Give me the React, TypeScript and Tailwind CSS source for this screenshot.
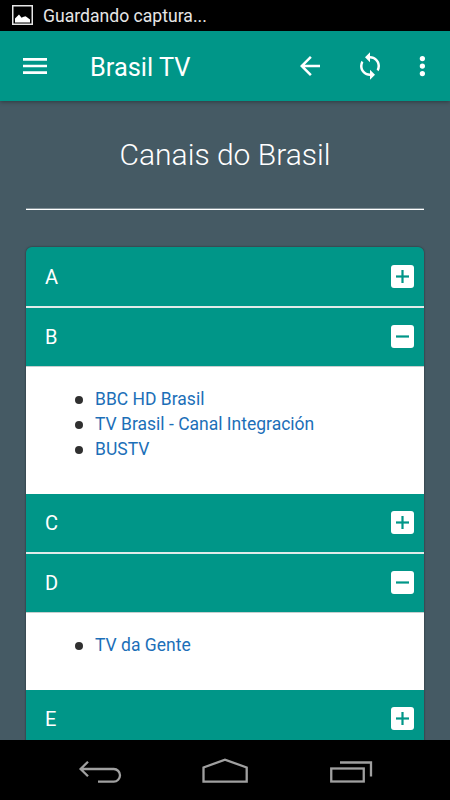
import { useState } from 'react';

interface Channel {
  letter: string;
  items: string[];
}

const SECTIONS: Channel[] = [
  { letter: 'A', items: [] },
  { letter: 'B', items: ['BBC HD Brasil', 'TV Brasil - Canal Integración', 'BUSTV'] },
  { letter: 'C', items: [] },
  { letter: 'D', items: ['TV da Gente'] },
  { letter: 'E', items: [] },
];

function StatusBar() {
  return (
    <div className="h-[31px] shrink-0 bg-black flex items-center pl-3">
      <svg width="21" height="20" viewBox="0 0 21 20" fill="none" className="-mt-px">
        <rect x="0.75" y="0.75" width="19.5" height="18.5" stroke="#e6e6e6" strokeWidth="1.5" />
        <path d="M3 17.5v-4l2.5-2.6L7 9.5l2.6 3.2 1.4-.8 2.5-.6 1.5 1 3 2.2v3z" fill="#fff" />
      </svg>
      <span className="ml-[10px] text-[17.6px] leading-[30px] text-[#e6e6e6]">Guardando captura...</span>
    </div>
  );
}

function AppBar() {
  return (
    <header className="relative z-10 h-[70px] shrink-0 bg-[#009688] flex items-center pl-[19px] pr-[13px] text-white shadow-[0_1px_4px_rgba(0,0,0,0.35)]">
      <button aria-label="Menu">
        <svg width="32" height="32" viewBox="0 0 24 24" fill="currentColor">
          <path d="M3 18h18v-2H3v2zm0-5h18v-2H3v2zm0-7v2h18V6H3z" />
        </svg>
      </button>
      <h1 className="ml-[39px] pt-px flex-1 text-[25.4px] leading-[30px]">Brasil TV</h1>
      <button aria-label="Back" className="mr-[30px]">
        <svg width="30" height="30" viewBox="0 0 24 24" fill="currentColor">
          <path d="M20 11H7.83l5.59-5.59L12 4l-8 8 8 8 1.41-1.41L7.83 13H20v-2z" />
        </svg>
      </button>
      <button aria-label="Reload" className="mr-[22px]">
        <svg width="30" height="30" viewBox="0 0 24 24" fill="currentColor">
          <path d="M12 4V1L8 5l4 4V6c3.31 0 6 2.69 6 6 0 1.01-.25 1.97-.7 2.8l1.46 1.46A7.93 7.93 0 0020 12c0-4.42-3.58-8-8-8zm0 14c-3.31 0-6-2.69-6-6 0-1.01.25-1.97.7-2.8L5.24 7.74A7.93 7.93 0 004 12c0 4.42 3.58 8 8 8v3l4-4-4-4v3z" />
        </svg>
      </button>
      <button aria-label="More">
        <svg width="30" height="30" viewBox="0 0 24 24" fill="currentColor">
          <circle cx="12.3" cy="6" r="2.1" />
          <circle cx="12.3" cy="12" r="2.1" />
          <circle cx="12.3" cy="18" r="2.1" />
        </svg>
      </button>
    </header>
  );
}

function ToggleIcon({ open }: { open: boolean }) {
  return (
    <span className="w-[23px] h-[23px] rounded-[3px] bg-white flex items-center justify-center">
      <svg width="13" height="13" viewBox="0 0 13 13" fill="#009688">
        <rect y="5.4" width="13" height="2.2" />
        {!open && <rect x="5.4" width="2.2" height="13" />}
      </svg>
    </span>
  );
}

function NavBar() {
  return (
    <nav className="h-[60px] shrink-0 bg-black flex items-center text-[#a0a0a0]">
      <button aria-label="Back" className="ml-[78px]">
        <svg width="44" height="26" viewBox="0 0 44 26" fill="none" stroke="currentColor" strokeWidth="2.3">
          <path d="M10 4.7 2.6 12 10 19.3M3 12h32.8a6.2 6.3 0 0 1 0 12.6H20" />
        </svg>
      </button>
      <button aria-label="Home" className="ml-[79px]">
        <svg width="48" height="26" viewBox="0 0 48 26" fill="none" stroke="currentColor" strokeWidth="2.3">
          <path d="M2.5 24.6V10.5L24 2.7l21.7 7.8v14.1z" />
        </svg>
      </button>
      <button aria-label="Recents" className="ml-[80px]">
        <svg width="44" height="26" viewBox="0 0 44 26" fill="none" stroke="currentColor" strokeWidth="2.3">
          <rect x="2.25" y="11.5" width="32.5" height="13" />
          <path d="M11 5.5h31v14.1" />
        </svg>
      </button>
    </nav>
  );
}

export default function App() {
  const [open, setOpen] = useState<string[]>(['B', 'D']);

  const toggle = (letter: string) => {
    setOpen(open.includes(letter) ? open.filter((l) => l !== letter) : [...open, letter]);
  };

  return (
    <div className="w-[450px] h-[800px] flex flex-col overflow-hidden bg-[#455a64] font-['Roboto',sans-serif]">
      <StatusBar />
      <AppBar />
      <main className="flex-1 min-h-0 overflow-hidden px-[26px]">
        <h2 className="pt-[34px] text-center text-[30px] leading-[40px] font-light text-white">Canais do Brasil</h2>
        <hr className="mt-[33px] border-0 h-[2px] bg-white border-t border-t-[#849299]" />
        <div className="mt-[37px] rounded-[6px] overflow-hidden shadow-[0_0_2px_rgba(0,0,0,0.6)]">
          {SECTIONS.map(({ letter, items }) => {
            const isOpen = open.includes(letter);
            return (
              <section key={letter} className="bg-[#009688] first:pt-px">
                <button
                  onClick={() => toggle(letter)}
                  className={`w-full box-border flex items-start justify-between pt-[17px] pl-[19px] pr-[10px] text-white text-xl leading-[25px] ${
                    isOpen ? 'h-[59px] border-b border-[#c5cfcf]' : 'h-[60px] border-b-2 border-[#e0eae9]'
                  }`}
                >
                  <span>{letter}</span>
                  <ToggleIcon open={isOpen} />
                </button>
                {isOpen && (
                  <ul className="bg-white pt-5 pb-[32px] pl-[49px]">
                    {items.map((item) => (
                      <li key={item} className="flex items-center h-[25px] text-[17.5px]">
                        <span className="w-[7.5px] h-[7.5px] mt-px mr-[12.5px] rounded-full bg-[#303030]" />
                        <a href="#" className="text-[#1c6fb8]">{item}</a>
                      </li>
                    ))}
                  </ul>
                )}
              </section>
            );
          })}
        </div>
      </main>
      <NavBar />
    </div>
  );
}
